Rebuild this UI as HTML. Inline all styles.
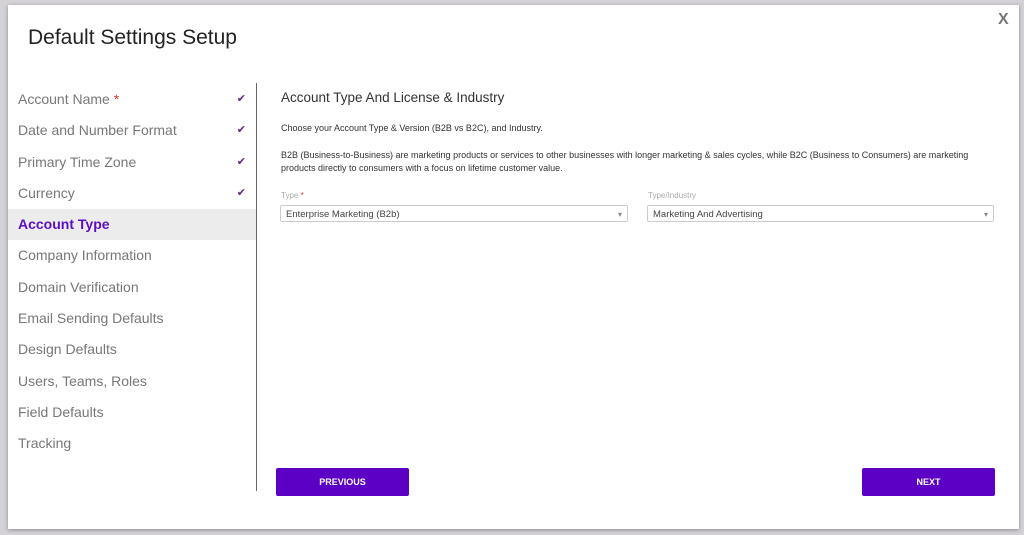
<!DOCTYPE html>
<html><head><style>
body{margin:0;width:1024px;height:535px;background:#d4d2d7;position:relative;overflow:hidden;font-family:"Liberation Sans",sans-serif}
.m{position:absolute;left:8px;top:5px;width:1011px;height:524px;background:#fff;box-shadow:0 1px 4px rgba(0,0,0,.35)}
h1{position:absolute;left:20px;top:21px;margin:0;font-weight:normal;font-size:21px;color:#222}
.x{position:absolute;left:990px;top:6px;font-size:16px;color:#777;font-weight:bold}
.nav{position:absolute;left:0;top:79px;width:248px}
.nav div{height:31.3px;line-height:31.3px;padding-left:10px;font-size:14px;color:#777;position:relative}
.nav div.a{background:#ececec;color:#5b0ec0;font-weight:bold}
.nav .c{position:absolute;right:10px;top:0;color:#5b2a86;font-size:11px}
.div{position:absolute;left:248px;top:78px;width:1px;height:408px;background:#666}
.r{position:absolute;left:273px;font-size:9px;color:#333}
.sel{position:absolute;top:200px;height:17px;border:1px solid #ccc;border-radius:2px;font-size:9.5px;color:#444;line-height:17px;padding-left:5px;box-sizing:border-box}
.sel:after{content:"▾";position:absolute;right:5px;top:0;color:#888;font-size:8px}
.lbl{position:absolute;top:186px;font-size:8px;color:#aaa}
.b{position:absolute;top:463px;width:133px;height:28px;background:#5b00c4;border-radius:2px;color:#fff;font-weight:bold;font-size:9px;text-align:center;line-height:28px}
</style></head><body>
<div class="m">
<h1>Default Settings Setup</h1>
<div class="x">X</div>
<div class="nav">
<div>Account Name <span style="color:#e33">*</span><span class="c">✔</span></div>
<div>Date and Number Format<span class="c">✔</span></div>
<div>Primary Time Zone<span class="c">✔</span></div>
<div>Currency<span class="c">✔</span></div>
<div class="a">Account Type</div>
<div>Company Information</div>
<div>Domain Verification</div>
<div>Email Sending Defaults</div>
<div>Design Defaults</div>
<div>Users, Teams, Roles</div>
<div>Field Defaults</div>
<div>Tracking</div>
</div>
<div class="div"></div>
<div class="r" style="top:85px;font-size:13.5px;color:#333">Account Type And License &amp; Industry</div>
<div class="r" style="top:118px">Choose your Account Type &amp; Version (B2B vs B2C), and Industry.</div>
<div class="r" style="top:144px;width:720px;line-height:13px">B2B (Business-to-Business) are marketing products or services to other businesses with longer marketing &amp; sales cycles, while B2C (Business to Consumers) are marketing products directly to consumers with a focus on lifetime customer value.</div>
<div class="lbl" style="left:273px">Type <span style="color:#e33">*</span></div>
<div class="sel" style="left:272px;width:348px">Enterprise Marketing (B2b)</div>
<div class="lbl" style="left:640px">Type/Industry</div>
<div class="sel" style="left:639px;width:347px">Marketing And Advertising</div>
<div class="b" style="left:268px">PREVIOUS</div>
<div class="b" style="left:854px">NEXT</div>
</div>
</body></html>
